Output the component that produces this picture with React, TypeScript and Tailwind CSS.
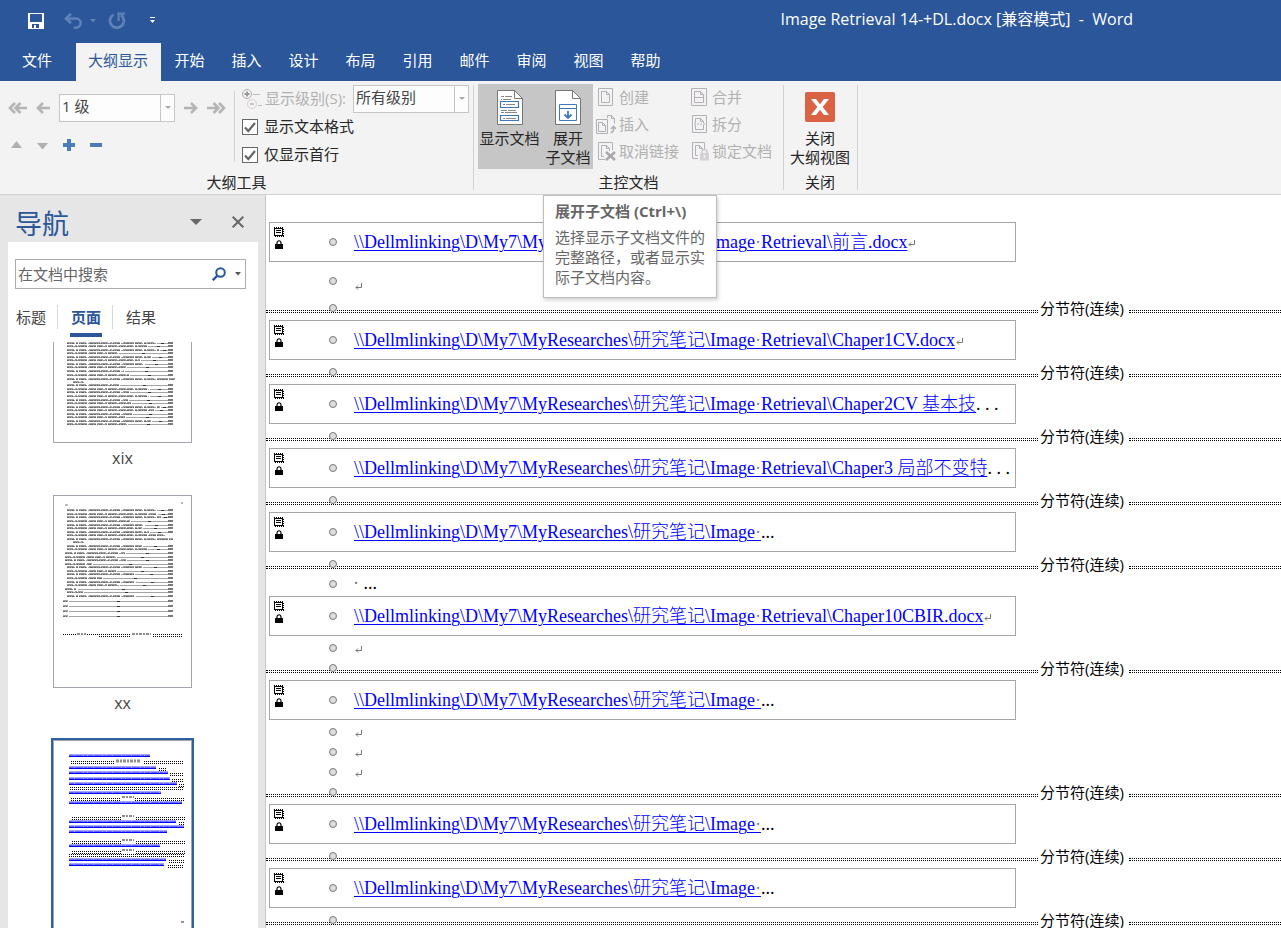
import React from "react";

const UI_FONT = "font-['Open_Sans','Noto_Sans_CJK_SC',sans-serif]";
const BASE = "\\\\Dellmlinking\\D\\My7\\MyResearches\\研究笔记\\";

/* ---------- Title bar ---------- */

function TitleBar() {
  return (
    <header className="flex h-[43px] shrink-0 items-center pl-7 text-white">
      <button aria-label="保存" className="mr-5 pb-0.5">
        <svg width="16" height="16" viewBox="0 0 16 16" shapeRendering="crispEdges">
          <path d="M0 0h16v16H0zM2 1v8h12V1zM4 11v4h2v-3h2v3h3v-4z" fill="#fff" fillRule="evenodd" />
        </svg>
      </button>
      <button aria-label="撤消" className="flex items-center gap-2 pb-0.5">
        <svg width="18" height="16" viewBox="0 0 18 16" fill="none" stroke="#5f81b5" strokeWidth="2.6">
          <path d="M1.5 5.5H12a4.6 4.6 0 0 1 0 9.2h-2.5" />
          <path d="M7 .8 2 5.5 7 10.2" />
        </svg>
        <svg width="6" height="4" viewBox="0 0 6 4">
          <path d="M0 0h6L3 3.5z" fill="#5f81b5" />
        </svg>
      </button>
      <button aria-label="重复" className="ml-3 pb-0.5">
        <svg width="18" height="17" viewBox="0 0 18 17" fill="none" stroke="#5f81b5" strokeWidth="2.8">
          <path d="M5.5 2.6A7 7 0 1 0 13 3" />
          <path d="M17 1.6h-6.4V9" strokeWidth="2.2" />
        </svg>
      </button>
      <button aria-label="自定义快速访问工具栏" className="ml-6 pb-0.5">
        <svg width="5" height="7" viewBox="0 0 5 7" fill="#fff">
          <path d="M0 0h5v1H0zM0 3h5L2.500 6z" />
        </svg>
      </button>
      <h1 className="mr-[148px] ml-auto pb-1.5 text-base whitespace-pre">Image Retrieval 14-+DL.docx [兼容模式]  -  Word</h1>
    </header>
  );
}

const TABS = ["开始", "插入", "设计", "布局", "引用", "邮件", "审阅", "视图", "帮助"];

function TabStrip() {
  return (
    <nav className="flex h-[38px] shrink-0 text-[15px] text-white">
      <button className="mr-0.5 w-[74px] pb-1">文件</button>
      <button className="w-[85px] bg-[#f3f3f3] pr-px pb-1 text-[#2b579a]">大纲显示</button>
      {TABS.map((t) => (
        <button key={t} className="w-[57px] pb-1">{t}</button>
      ))}
    </nav>
  );
}

/* ---------- Ribbon ---------- */

function Arrow({ dir, double }: { dir: "left" | "right"; double?: boolean }) {
  const flip = dir === "right" ? "scale-x-[-1]" : "";
  return (
    <svg className={flip} width={double ? 19 : 14} height="12" viewBox={double ? "0 0 19 12" : "0 0 14 12"} fill="none" stroke="#b4b4b4" strokeWidth="2.6">
      <path d="M7 1 2 6l5 5" />
      {double ? <path d="M12.500 1 7.500 6l5 5M8 6h11" /> : <path d="M2 6h12" />}
    </svg>
  );
}

function Combo({ label, options }: { label: string; options: string[] }) {
  return (
    <div className="flex h-7 w-[116px] border border-[#c6c6c6] bg-[#fdfdfd]">
      <select aria-label={label} className="min-w-0 flex-1 appearance-none bg-transparent pb-1 pl-0.5 text-[15px] leading-5 text-[#444] outline-none">
        {options.map((o) => <option key={o}>{o}</option>)}
      </select>
      <span className="flex w-3.5 items-center justify-center border-l border-[#c6c6c6]">
        <svg width="6" height="4" viewBox="0 0 6 4"><path d="M0 0h6L3 3z" fill="#aaa" /></svg>
      </span>
    </div>
  );
}

function Check({ id, label }: { id: string; label: string }) {
  return (
    <div className="flex h-7 items-center gap-1.5">
      <span className="grid size-4 place-items-center">
        <input id={id} type="checkbox" defaultChecked className="peer col-start-1 row-start-1 size-4 appearance-none border border-[#666] bg-white" />
        <svg className="pointer-events-none invisible col-start-1 row-start-1 peer-checked:visible" width="12" height="11" viewBox="0 0 12 11" fill="none" stroke="#666" strokeWidth="2.2">
          <path d="M1 5.500 4.300 9 11 1" />
        </svg>
      </span>
      <label htmlFor={id} className="pb-0.5 text-[15px] leading-5 text-[#262626]">{label}</label>
    </div>
  );
}

function GroupLabel({ children }: { children: React.ReactNode }) {
  return <div className="mt-auto mb-0.5 text-center text-[15px] leading-[19px] text-[#262626]">{children}</div>;
}

function OutlineTools() {
  return (
    <section className="flex h-full w-[473px] flex-col">
      <div className="flex">
        <div className="w-[234px] pt-[13px] pl-2">
          <div className="flex items-center">
            <button aria-label="提升至标题 1"><Arrow dir="left" double /></button>
            <button aria-label="升级" className="mr-[9px] ml-[9px]"><Arrow dir="left" /></button>
            <Combo label="大纲级别" options={["1 级", "2 级", "3 级"]} />
            <button aria-label="降级" className="mr-[9px] ml-[9px]"><Arrow dir="right" /></button>
            <button aria-label="降级为正文"><Arrow dir="right" double /></button>
          </div>
          <div className="mt-[17px] flex items-center gap-[15px] pl-[3px]">
            <button aria-label="上移"><svg width="11" height="12" viewBox="0 0 11 12"><path d="M5.500 2 11 9H0z" fill="#b0b0b0" /></svg></button>
            <button aria-label="下移"><svg width="11" height="12" viewBox="0 0 11 12"><path d="M5.500 10.500 11 4H0z" fill="#b0b0b0" /></svg></button>
            <button aria-label="展开"><svg width="12" height="12" viewBox="0 0 12 12"><path d="M4 0h4v4h4v4H8v4H4V8H0V4h4z" fill="#4a7ebb" /></svg></button>
            <button aria-label="折叠"><svg width="12" height="12" viewBox="0 0 12 12"><path d="M0 4h12v4H0z" fill="#4a7ebb" /></svg></button>
          </div>
        </div>
        <div className="mt-[10px] h-[71px] w-px bg-[#d2d2d2]" />
        <div className="flex flex-col pt-1 pl-[7px]">
          <div className="flex items-center">
            <svg width="20" height="20" viewBox="0 0 20 20" fill="none">
              <circle cx="5" cy="5" r="4.500" stroke="#b0acb0" />
              <path d="M2.500 5h5M5 2.500v5" stroke="#9a969a" strokeWidth="1.800" />
              <path d="M11 5.500h7M16 16.500h4" stroke="#bbb" />
              <circle cx="10" cy="15" r="4.500" stroke="#d8ccd8" />
              <path d="M8 15h4" stroke="#c4b4c4" strokeWidth="1.600" />
            </svg>
            <span className="w-[91px] pb-0.5 pl-[3px] text-[15px] leading-5 whitespace-nowrap text-[#b1b1b1]">显示级别(S):</span>
            <Combo label="显示级别" options={["所有级别", "1 级", "2 级"]} />
          </div>
          <Check id="show-format" label="显示文本格式" />
          <Check id="first-line" label="仅显示首行" />
        </div>
      </div>
      <GroupLabel>大纲工具</GroupLabel>
    </section>
  );
}

function ShowDocIcon() {
  return (
    <svg width="26" height="35" viewBox="0 0 26 35" fill="none">
      <path d="M.5.500h17l8 8v26H.5z" fill="#fff" stroke="#777" />
      <path d="M17.500.5v8h8" stroke="#777" />
      <path d="M3.500 11.500h18v6h-18zM3.500 25.500h18v5h-18z" stroke="#3d78b8" strokeWidth="1.200" />
      <path d="M4 6.500h3M8 6.500h7M4 9.500h1M6 9.500h8M4 20.500h6M11 20.500h8M4 22.500h3M8 22.500h12M6 14.500h2M9 14.500h9M6 28.500h2M9 28.500h10" stroke="#888" />
    </svg>
  );
}

function ExpandDocIcon() {
  return (
    <svg width="26" height="35" viewBox="0 0 26 35" fill="none">
      <path d="M.5.500h17l8 8v26H.5z" fill="#fff" stroke="#777" />
      <path d="M17.500.5v8h8" stroke="#777" />
      <path d="M4.500 14.500h17v16h-17zM4.500 18.500h17" stroke="#3d78b8" />
      <path d="M13 21v7M9.500 24.500 13 28l3.500-3.500" stroke="#3d78b8" strokeWidth="1.800" />
    </svg>
  );
}

const SMALL_ICONS: Record<string, React.ReactNode> = {
  创建: <path d="M2.500.5h14v17h-14zM5.500 3.500h5l3 3v8h-8zM10.500 3.500v3h3" />,
  合并: <path d="M2.500.5h15v17h-15zM5.500 3.500h6l3 3v8h-9zM11.500 3.500v3h3M5.500 9.500h9" />,
  插入: (
    <>
      <path d="M.5 4.500h11v14H.5zM2.500 7.500h4l3 3v6h-7zM6.500 7.500v3h3M11.500 3V.5h4l3 3v5M15.500.5v3h3" />
      <path d="M14.500 17.500c3 0 3-2 3-5M15 14l2.500-2.500L20 14" strokeWidth="1.600" />
    </>
  ),
  拆分: (
    <>
      <path d="M3.500.5h14v17h-14zM6.500 8v-4.500h5l3 3V8M11.500 3.500v3h3M6.500 10v4.500h8V10" />
      <path d="M5 9h11" strokeDasharray="2 1" />
    </>
  ),
  取消链接: (
    <>
      <path d="M9 17.500H2.500V.5h14V8M8 14.500H5.500v-11h5l3 3V9M10.500 3.500v3h3" />
      <path d="m10 10 9 8M19 10l-9 8" stroke="#aaa6aa" strokeWidth="2.400" />
    </>
  ),
  锁定文档: (
    <>
      <path d="M9 16.500H3.500V.5h12V7M9 13.500H6.500v-10h4l3 3V8M10.500 3.500v3h3" />
      <path d="M13 12v-2a2.500 2.500 0 0 1 5 0v2" stroke="#cfcacf" strokeWidth="1.600" />
      <path d="M11 11h9v7.500h-9z" fill="#d5d0d5" stroke="none" />
      <path d="M15.500 13v3" stroke="#f3f3f3" strokeWidth="1.400" />
    </>
  ),
};

function SmallCommand({ name }: { name: string }) {
  return (
    <button className="flex h-[27px] items-center gap-[3px] text-[15px] leading-5 whitespace-nowrap text-[#b1b1b1]">
      <svg width="20" height="20" viewBox="0 0 20 20" fill="none" stroke="#b5b0b8">{SMALL_ICONS[name]}</svg>
      <span className="pb-0.5">{name}</span>
    </button>
  );
}

function MasterDocument() {
  return (
    <section className="flex h-full w-[309px] flex-col">
      <div className="flex pt-[3px] pl-1">
        <button className="flex h-[85px] w-[65px] flex-col items-center gap-1 bg-[#c6c6c6] pt-1.5 pr-0.5 text-[15px] leading-[19px] whitespace-nowrap text-[#262626]">
          <ShowDocIcon />
          显示文档
        </button>
        <div className="relative">
          <button aria-describedby="expand-tip" className="flex h-[85px] w-[50px] flex-col items-center gap-1 bg-[#c6c6c6] pt-1.5 text-[15px] leading-[19px] whitespace-nowrap text-[#262626]">
            <ExpandDocIcon />
            <span>展开<br />子文档</span>
          </button>
          <div id="expand-tip" role="tooltip" className="absolute top-[111px] left-0 z-10 h-[103px] w-[174px] border border-[#bebebe] bg-white px-[11px] pt-[5px] text-[15px] leading-5 text-[#666] shadow-[1px_2px_4px_rgba(0,0,0,0.2)]">
            <p className="mb-1.5 font-bold whitespace-nowrap">展开子文档 (Ctrl+\)</p>
            <p>选择显示子文档文件的完整路径，或者显示实际子文档内容。</p>
          </div>
        </div>
        <div className="ml-[3px] w-[93px]">
          <SmallCommand name="创建" />
          <SmallCommand name="插入" />
          <SmallCommand name="取消链接" />
        </div>
        <div>
          <SmallCommand name="合并" />
          <SmallCommand name="拆分" />
          <SmallCommand name="锁定文档" />
        </div>
      </div>
      <GroupLabel>主控文档</GroupLabel>
    </section>
  );
}

function CloseGroup() {
  return (
    <section className="flex h-full w-[73px] flex-col pr-px">
      <button className="flex flex-col items-center gap-[7px] pt-[11px] text-[15px] leading-[19px] text-[#262626]">
        <svg width="30" height="30" viewBox="0 0 30 30">
          <rect width="30" height="30" rx="2" fill="#da6245" />
          <path d="M6 7h5l4 5.300L19 7h5l-6.300 8L24 23h-5l-4-5.300L11 23H6l6.300-8z" fill="#fff" />
        </svg>
        <span>关闭<br />大纲视图</span>
      </button>
      <GroupLabel>关闭</GroupLabel>
    </section>
  );
}

function Ribbon() {
  const divider = <div className="mt-1 h-[105px] w-px bg-[#d2d2d2]" />;
  return (
    <div className="flex h-[114px] shrink-0 border-b border-[#d2d2d2] bg-[#f3f3f3]">
      <OutlineTools />
      {divider}
      <MasterDocument />
      {divider}
      <CloseGroup />
      {divider}
    </div>
  );
}

/* ---------- Navigation pane ---------- */

type Toc = [y: number, start: number, textEnd: number, leader: boolean];

const PAGE_XIX: Toc[] = [
  [93, 14, 103, true], [96, 14, 94, true], [100, 14, 106, true], [103, 14, 65, true],
  [107, 14, 98, true], [110, 14, 87, true], [114, 14, 91, true], [117, 14, 73, true],
  [121, 14, 71, true], [125, 14, 76, true], [129, 14, 122, false], [132, 20, 31, false],
  [135, 14, 66, true], [139, 14, 96, true], [142, 14, 76, true], [146, 14, 96, true],
  [150, 14, 75, true], [153, 14, 78, true], [157, 14, 107, true], [160, 14, 101, true],
  [164, 14, 79, true], [167, 14, 72, true], [171, 14, 98, true], [174, 14, 74, true],
];

const PAGE_XX: Toc[] = [
  [15, 14, 103, true], [19, 14, 104, true], [22, 14, 108, true], [26, 14, 77, true],
  [30, 14, 91, true], [33, 14, 89, true], [37, 14, 96, true], [40, 14, 112, false],
  [44, 14, 120, false], [47, 20, 31, false], [51, 14, 89, true], [54, 14, 94, true],
  [58, 12, 72, true], [62, 12, 63, true], [65, 12, 73, true], [69, 12, 39, true],
  [72, 14, 89, true], [76, 14, 63, true], [79, 14, 81, true], [83, 14, 49, true],
  [87, 14, 82, true], [90, 14, 66, true], [94, 12, 24, true], [97, 14, 30, true],
  [101, 14, 82, true], [106, 10, 15, true], [111, 10, 15, true], [116, 10, 15, true], [121, 10, 15, true],
];

function TocLines({ lines }: { lines: Toc[] }) {
  return (
    <>
      {lines.map(([y, start, end, leader], i) => (
        <g key={y} stroke="#333">
          <path d={`M${start} ${y}H${end}`} strokeWidth="2" strokeOpacity=".45" strokeDasharray={i % 2 ? "6 2 2 1 9 2 7 1" : "7 2 2 1 7 3 11 1"} />
          <path d={`M${start} ${y + 0.5}H${end}`} strokeWidth="1" strokeOpacity=".5" strokeDasharray="2 1 1 1 3 1" />
          {leader && (
            <>
              <path d={`M${end + 1} ${y + 0.5}H115`} strokeWidth="1" strokeOpacity=".45" />
              <path d={`M${Math.round((end + 113) / 2)} ${y + 0.5}h3`} strokeWidth="1" />
              <path d={`M115 ${y}h5`} strokeWidth="2" strokeOpacity=".65" />
            </>
          )}
        </g>
      ))}
    </>
  );
}

const LINK_LINES: [number, number][] = [
  [16, 97], [28, 103], [33, 115], [39, 117], [44, 124], [53, 108], [63, 129],
  [82, 123], [87, 131], [92, 114], [106, 107], [120, 113], [125, 111],
];
const BREAK_LINES: [number, number, number][] = [
  [22, 18, 61], [22, 91, 131], [29, 106, 113], [34, 117, 131], [40, 119, 131], [45, 126, 131],
  [48, 17, 131], [59, 18, 67], [59, 82, 131], [78, 19, 68], [78, 83, 132], [83, 126, 131],
  [102, 19, 68], [102, 83, 132], [112, 19, 68], [112, 83, 132], [115, 16, 131], [121, 116, 131], [126, 115, 131],
];

function LinkPage() {
  return (
    <>
      {LINK_LINES.map(([y, end]) => (
        <g key={y} stroke="#00f">
          <path d={`M16 ${y - 1}H${end}`} strokeOpacity=".35" strokeWidth="2" />
          <path d={`M16 ${y - 0.5}H${end}`} strokeOpacity=".4" strokeDasharray="5 1 8 1 3 1" />
          <path d={`M16 ${y + 0.5}H${end}`} />
        </g>
      ))}
      {BREAK_LINES.map(([y, a, b]) => (
        <path key={`${y}-${a}`} d={`M${a} ${y - 0.5}H${b}M${a} ${y + 1.5}H${b}`} stroke="#000" strokeDasharray="1 1" />
      ))}
      <path d="M63 21h24" stroke="#444" strokeWidth="3" strokeDasharray="3 1 2 1" strokeOpacity=".6" />
      {[57, 76, 100, 110].map((y) => (
        <path key={y} d={`M69 ${y}h12`} stroke="#444" strokeWidth="2" strokeDasharray="3 1 2 1" strokeOpacity=".6" />
      ))}
      <path d="M128 182h3" stroke="#999" strokeWidth="2" />
    </>
  );
}

function Thumb({ selected, label, children }: { selected?: boolean; label: string; children: React.ReactNode }) {
  return (
    <figure className="flex h-[245px] shrink-0 flex-col items-center">
      <button
        aria-label={`第 ${label} 页`}
        className={selected ? "border border-[#a0a5ae] bg-white outline-2 outline-[#2c62a0]" : "border border-[#a0a5ae] bg-white"}
      >
        <svg width="137" height="191" viewBox="1 1 137 191" fill="none" className="block">{children}</svg>
      </button>
      <figcaption className="mt-[3px] text-base leading-6 text-[#444]">{label}</figcaption>
    </figure>
  );
}

function NavPane() {
  return (
    <aside className="flex w-[266px] shrink-0 flex-col border-r border-[#c6c6c6] bg-[#e6e6e6] px-2 pr-[7px]">
      <div className="flex h-[47px] shrink-0 items-center pt-1.5 pr-[14px] pl-[7px]">
        <h2 className="flex-1 pt-1 text-[27px] leading-9 text-[#2b579a]">导航</h2>
        <button aria-label="任务窗格选项" className="mr-[30px]">
          <svg width="12" height="6" viewBox="0 0 12 6"><path d="M0 0h12L6 6z" fill="#666" /></svg>
        </button>
        <button aria-label="关闭">
          <svg width="12" height="12" viewBox="0 0 12 12" stroke="#666" strokeWidth="2"><path d="m.7.700 10.600 10.600M11.300.7.700 11.300" /></svg>
        </button>
      </div>
      <div className="flex min-h-0 flex-1 flex-col bg-white pt-[17px]">
        <div className="mr-3 ml-[7px] flex h-[30px] shrink-0 items-center border border-[#ababab] pr-1 pl-0.5">
          <input aria-label="在文档中搜索" placeholder="在文档中搜索" className="min-w-0 flex-1 bg-transparent text-[15px] outline-none placeholder:text-[#666]" />
          <button aria-label="搜索" className="mr-[9px]">
            <svg width="14" height="14" viewBox="0 0 14 14" fill="none" stroke="#2b579a"><circle cx="8.500" cy="5.500" r="4.300" strokeWidth="2" /><path d="M5.500 8.500.8 13.200" strokeWidth="2.400" /></svg>
          </button>
          <button aria-label="搜索选项">
            <svg width="6" height="4" viewBox="0 0 6 4"><path d="M0 0h6L3 3.500z" fill="#555" /></svg>
          </button>
        </div>
        <div role="tablist" className="mt-4 flex h-[37px] shrink-0 pl-2 text-[15px] leading-6 text-[#444]">
          <button role="tab" className="h-6 w-[42px] border-r border-[#d8d8d8] pr-[11px]">标题</button>
          <button role="tab" aria-selected="true" className="mr-[10px] ml-3 h-8 w-8 border-b-4 border-[#2b579a] pb-1 font-bold whitespace-nowrap text-[#2b579a]">页面</button>
          <button role="tab" className="h-6 w-[57px] border-l border-[#d8d8d8]">结果</button>
        </div>
        <div className="min-h-0 flex-1 overflow-hidden pr-[21px]">
          <div className="-mt-[92px] flex flex-col">
            <Thumb label="xix"><TocLines lines={PAGE_XIX} /></Thumb>
            <Thumb label="xx">
              <path d="M12 10h3M128 8h2" stroke="#777" />
              <TocLines lines={PAGE_XX} />
              <path d="M10 139.500h13M34 139.500h12" stroke="#000" strokeDasharray="1 1" />
              <path d="M46 139.500h31M46 141.500h31M100 139.500h29M100 141.500h29" stroke="#000" strokeDasharray="1 1" />
              <path d="M24 139h9M79 139h19" stroke="#444" strokeWidth="2" strokeOpacity=".6" strokeDasharray="3 1 2 1" />
            </Thumb>
            <Thumb label="xxi" selected><LinkPage /></Thumb>
          </div>
        </div>
      </div>
    </aside>
  );
}

/* ---------- Outline document ---------- */

function Bullet({ className = "" }: { className?: string }) {
  return <span className={`block size-2 shrink-0 rounded-full border border-[#777] bg-[#ddd] ${className}`} />;
}

function ReturnMark() {
  return (
    <svg className="shrink-0" width="7" height="8" viewBox="0 0 7 8" fill="none" stroke="#777">
      <path d="M6.500 0v4.500H1M3 2.500 1 4.500l2 2" />
    </svg>
  );
}

function SubDocument({ path, tail }: { path: string; tail?: string }) {
  const [before, after] = path.split("·");
  return (
    <div className="mt-1 ml-[3px] flex h-10 w-[747px] border border-[#a6a6a6] pl-1">
      <div className="flex w-[55px] flex-col gap-[3px] pt-1">
        <svg width="10" height="10" viewBox="0 0 10 10" fill="none" stroke="#000" shapeRendering="crispEdges">
          <path d="M.5 9V1.500h8V8.500H0" />
          <path d="M0 .5h10M1 9.500h9M9.500 2v7" strokeDasharray="1 1" />
          <path d="M2 3.500h5M2 5.500h5" />
        </svg>
        <svg width="10" height="9" viewBox="0 0 10 9">
          <path d="M3 5V3C3 0 7 0 7 3v2" fill="none" stroke="#000" strokeWidth="1.200" />
          <path d="M1 4h8v5H1z" fill="#000" />
        </svg>
      </div>
      <Bullet className="mt-[15px]" />
      <p className="flex items-center pl-[17px] font-['Liberation_Serif','Noto_Sans_CJK_SC',serif] text-lg leading-5 whitespace-pre text-black">
        <a href="#" className="font-light text-[#0000ff] underline decoration-1 underline-offset-2">
          {BASE}{before}<span className="text-[#8080a0]">·</span>{after}
        </a>
        {tail ? <span>{tail}</span> : <span className="pt-1 pl-px"><ReturnMark /></span>}
      </p>
    </div>
  );
}

function SectionBreak() {
  return (
    <div className="relative flex h-5">
      <div className="mt-3.5 h-[3px] w-[772px] shrink-0 border-y border-dotted border-black" />
      <span className="w-[91px] shrink-0 pt-[3px] pl-0.5 text-[15px] leading-[18px] text-black">分节符(连续)</span>
      <div className="mt-3.5 h-[3px] flex-1 border-y border-dotted border-black" />
      <Bullet className="absolute top-2 left-[63px]" />
    </div>
  );
}

function Paragraph({ text, tall }: { text?: string; tall?: boolean }) {
  return (
    <div className={tall ? "flex h-[34px] pt-[15px] pl-[63px]" : "flex h-5 pt-2 pl-[63px]"}>
      <Bullet />
      {text ? (
        <span className="-mt-1.5 pl-4 font-['Liberation_Serif',serif] text-lg leading-none whitespace-pre text-black">
          <span className="text-gray-500">·</span>{text}
        </span>
      ) : (
        <div className={tall ? "pt-1.5 pl-[18px]" : "pt-0.5 pl-[18px]"}>
          <ReturnMark />
        </div>
      )}
    </div>
  );
}

function Document() {
  return (
    <main className="min-w-0 flex-1 overflow-hidden bg-white pt-[23px]">
      <SubDocument path="Image·Retrieval\前言.docx" />
      <Paragraph tall />
      <SectionBreak />
      <SubDocument path="Image·Retrieval\Chaper1CV.docx" />
      <SectionBreak />
      <SubDocument path="Image·Retrieval\Chaper2CV 基本技" tail=". . ." />
      <SectionBreak />
      <SubDocument path="Image·Retrieval\Chaper3 局部不变特" tail=". . ." />
      <SectionBreak />
      <SubDocument path="Image·" tail="..." />
      <SectionBreak />
      <Paragraph text=" ..." />
      <SubDocument path="Image·Retrieval\Chaper10CBIR.docx" />
      <Paragraph />
      <SectionBreak />
      <SubDocument path="Image·" tail="..." />
      <Paragraph />
      <Paragraph />
      <Paragraph />
      <SectionBreak />
      <SubDocument path="Image·" tail="..." />
      <SectionBreak />
      <SubDocument path="Image·" tail="..." />
      <SectionBreak />
    </main>
  );
}

export default function App() {
  return (
    <div className={`flex h-screen flex-col overflow-hidden bg-[#2b579a] ${UI_FONT}`}>
      <TitleBar />
      <TabStrip />
      <Ribbon />
      <div className="flex min-h-0 flex-1">
        <NavPane />
        <Document />
      </div>
    </div>
  );
}
